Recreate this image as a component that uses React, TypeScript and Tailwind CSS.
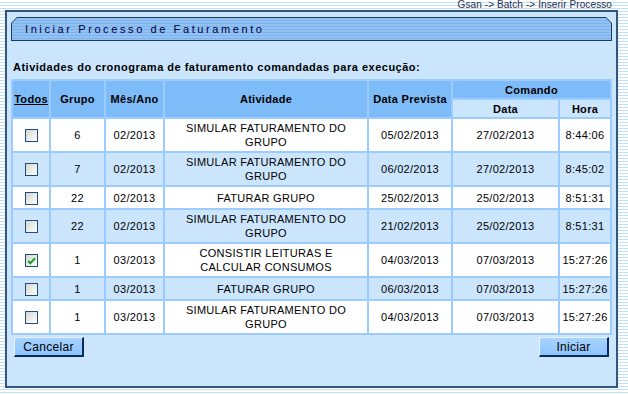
import React from "react";

type Row = {
  g: string;
  m: string;
  a: React.ReactNode;
  two: boolean;
  dp: string;
  d: string;
  h: string;
  checked?: boolean;
};

const SIM = (
  <>
    SIMULAR FATURAMENTO DO
    <br />
    GRUPO
  </>
);

const rows: Row[] = [
  { g: "6", m: "02/2013", a: SIM, two: true, dp: "05/02/2013", d: "27/02/2013", h: "8:44:06" },
  { g: "7", m: "02/2013", a: SIM, two: true, dp: "06/02/2013", d: "27/02/2013", h: "8:45:02" },
  { g: "22", m: "02/2013", a: "FATURAR GRUPO", two: false, dp: "25/02/2013", d: "25/02/2013", h: "8:51:31" },
  { g: "22", m: "02/2013", a: SIM, two: true, dp: "21/02/2013", d: "25/02/2013", h: "8:51:31" },
  {
    g: "1",
    m: "03/2013",
    a: (
      <>
        CONSISTIR LEITURAS E
        <br />
        CALCULAR CONSUMOS
      </>
    ),
    two: true,
    dp: "04/03/2013",
    d: "07/03/2013",
    h: "15:27:26",
    checked: true,
  },
  { g: "1", m: "03/2013", a: "FATURAR GRUPO", two: false, dp: "06/03/2013", d: "07/03/2013", h: "15:27:26" },
  { g: "1", m: "03/2013", a: SIM, two: true, dp: "04/03/2013", d: "07/03/2013", h: "15:27:26" },
];

function Check({ checked }: { checked?: boolean }) {
  return (
    <span className="inline-flex items-center justify-center w-[13px] h-[13px] border border-[#1c4f80] bg-gradient-to-br from-[#d6d6d0] to-white align-middle">
      {checked && (
        <svg width="9" height="8" viewBox="0 0 9 8">
          <path d="M1 4 L3.3 6.3 L8 1.2" stroke="#21a121" strokeWidth="2" fill="none" />
        </svg>
      )}
    </span>
  );
}

function Btn({ children }: { children: React.ReactNode }) {
  return (
    <button className="w-[70px] h-[20px] bg-gradient-to-b from-[#a8d3ff] to-[#8dc4ff] border-t border-l border-t-[#e6f3ff] border-l-[#e6f3ff] border-b-2 border-r-2 border-b-[#0c2a5a] border-r-[#0c2a5a] text-[12px] leading-[16px] text-black tracking-[0.3px]">
      {children}
    </button>
  );
}

export default function App() {
  return (
    <div
      className="w-[628px] h-[394px] overflow-hidden bg-[repeating-linear-gradient(to_bottom,#ffffff_0px,#ffffff_2px,#c0dfff_2px,#c0dfff_3px)] text-black"
      style={{ fontFamily: '"Liberation Sans", Arial, sans-serif' }}
    >
      <div className="h-[10px] flex justify-end pr-[16px] text-[10px] leading-[10px] text-[#2e2e48] tracking-[0.1px]">
        {"Gsan -> Batch -> Inserir Processo"}
      </div>
      <div className="ml-[5px] w-[613px] h-[378px] border-2 border-[#33557a] bg-[#cbe5fd] pt-[5px] px-[4px]">
        <div className="w-[601px] h-[24px] bg-[#1f3c5c] [clip-path:polygon(6px_0,calc(100%-6px)_0,100%_6px,100%_100%,0_100%,0_6px)] p-[1px]">
          <div className="w-full h-full [clip-path:polygon(5px_0,calc(100%-5px)_0,100%_5px,100%_100%,0_100%,0_5px)] bg-[repeating-linear-gradient(to_bottom,#92c2f3_0px,#92c2f3_2px,#7fb2ea_2px,#7fb2ea_3px)] flex items-center pl-[13px] text-[11px] tracking-[2.6px] text-[#00003a]">
            Iniciar Processo de Faturamento
          </div>
        </div>
        <div className="mt-[20px] h-[13px] pl-[2px] text-[11px] leading-[13px] font-bold tracking-[0.5px]">
          Atividades do cronograma de faturamento comandadas para execução:
        </div>
        <table className="mt-[5px] w-[601px] table-fixed border-separate border-spacing-[2px] bg-[#9ccbff] text-[11px] leading-[14px] tracking-[0.3px]">
          <colgroup>
            <col className="w-[36px]" />
            <col className="w-[53px]" />
            <col className="w-[57px]" />
            <col className="w-[202px]" />
            <col className="w-[82px]" />
            <col className="w-[105px]" />
            <col className="w-[50px]" />
          </colgroup>
          <thead>
            <tr className="h-[17px]">
              <th rowSpan={2} className="p-0 bg-[#7ebbf9] font-bold underline">Todos</th>
              <th rowSpan={2} className="p-0 bg-[#7ebbf9] font-bold">Grupo</th>
              <th rowSpan={2} className="p-0 bg-[#7ebbf9] font-bold">Mês/Ano</th>
              <th rowSpan={2} className="p-0 bg-[#7ebbf9] font-bold">Atividade</th>
              <th rowSpan={2} className="p-0 bg-[#7ebbf9] font-bold">Data Prevista</th>
              <th colSpan={2} className="p-0 bg-[#7ebbf9] font-bold">Comando</th>
            </tr>
            <tr className="h-[17px]">
              <th className="p-0 bg-[#cbe5fd] font-bold">Data</th>
              <th className="p-0 bg-[#cbe5fd] font-bold">Hora</th>
            </tr>
          </thead>
          <tbody>
            {rows.map((r, i) => {
              const bg = i % 2 === 0 ? "bg-white" : "bg-[#cbe5fd]";
              const h = r.two ? "h-[32px]" : "h-[21px]";
              return (
                <tr key={i} className={h}>
                  <td className={`p-0 text-center align-middle ${bg}`}>
                    <Check checked={r.checked} />
                  </td>
                  <td className={`p-0 text-center ${bg}`}>{r.g}</td>
                  <td className={`p-0 text-center ${bg}`}>{r.m}</td>
                  <td className={`p-0 text-center ${bg}`}>{r.a}</td>
                  <td className={`p-0 text-center ${bg}`}>{r.dp}</td>
                  <td className={`p-0 text-center ${bg}`}>{r.d}</td>
                  <td className={`p-0 text-center whitespace-nowrap ${bg}`}>{r.h}</td>
                </tr>
              );
            })}
          </tbody>
        </table>
        <div className="mt-[2px] flex justify-between pl-[3px] pr-[3px]">
          <Btn>Cancelar</Btn>
          <Btn>Iniciar</Btn>
        </div>
      </div>
    </div>
  );
}
